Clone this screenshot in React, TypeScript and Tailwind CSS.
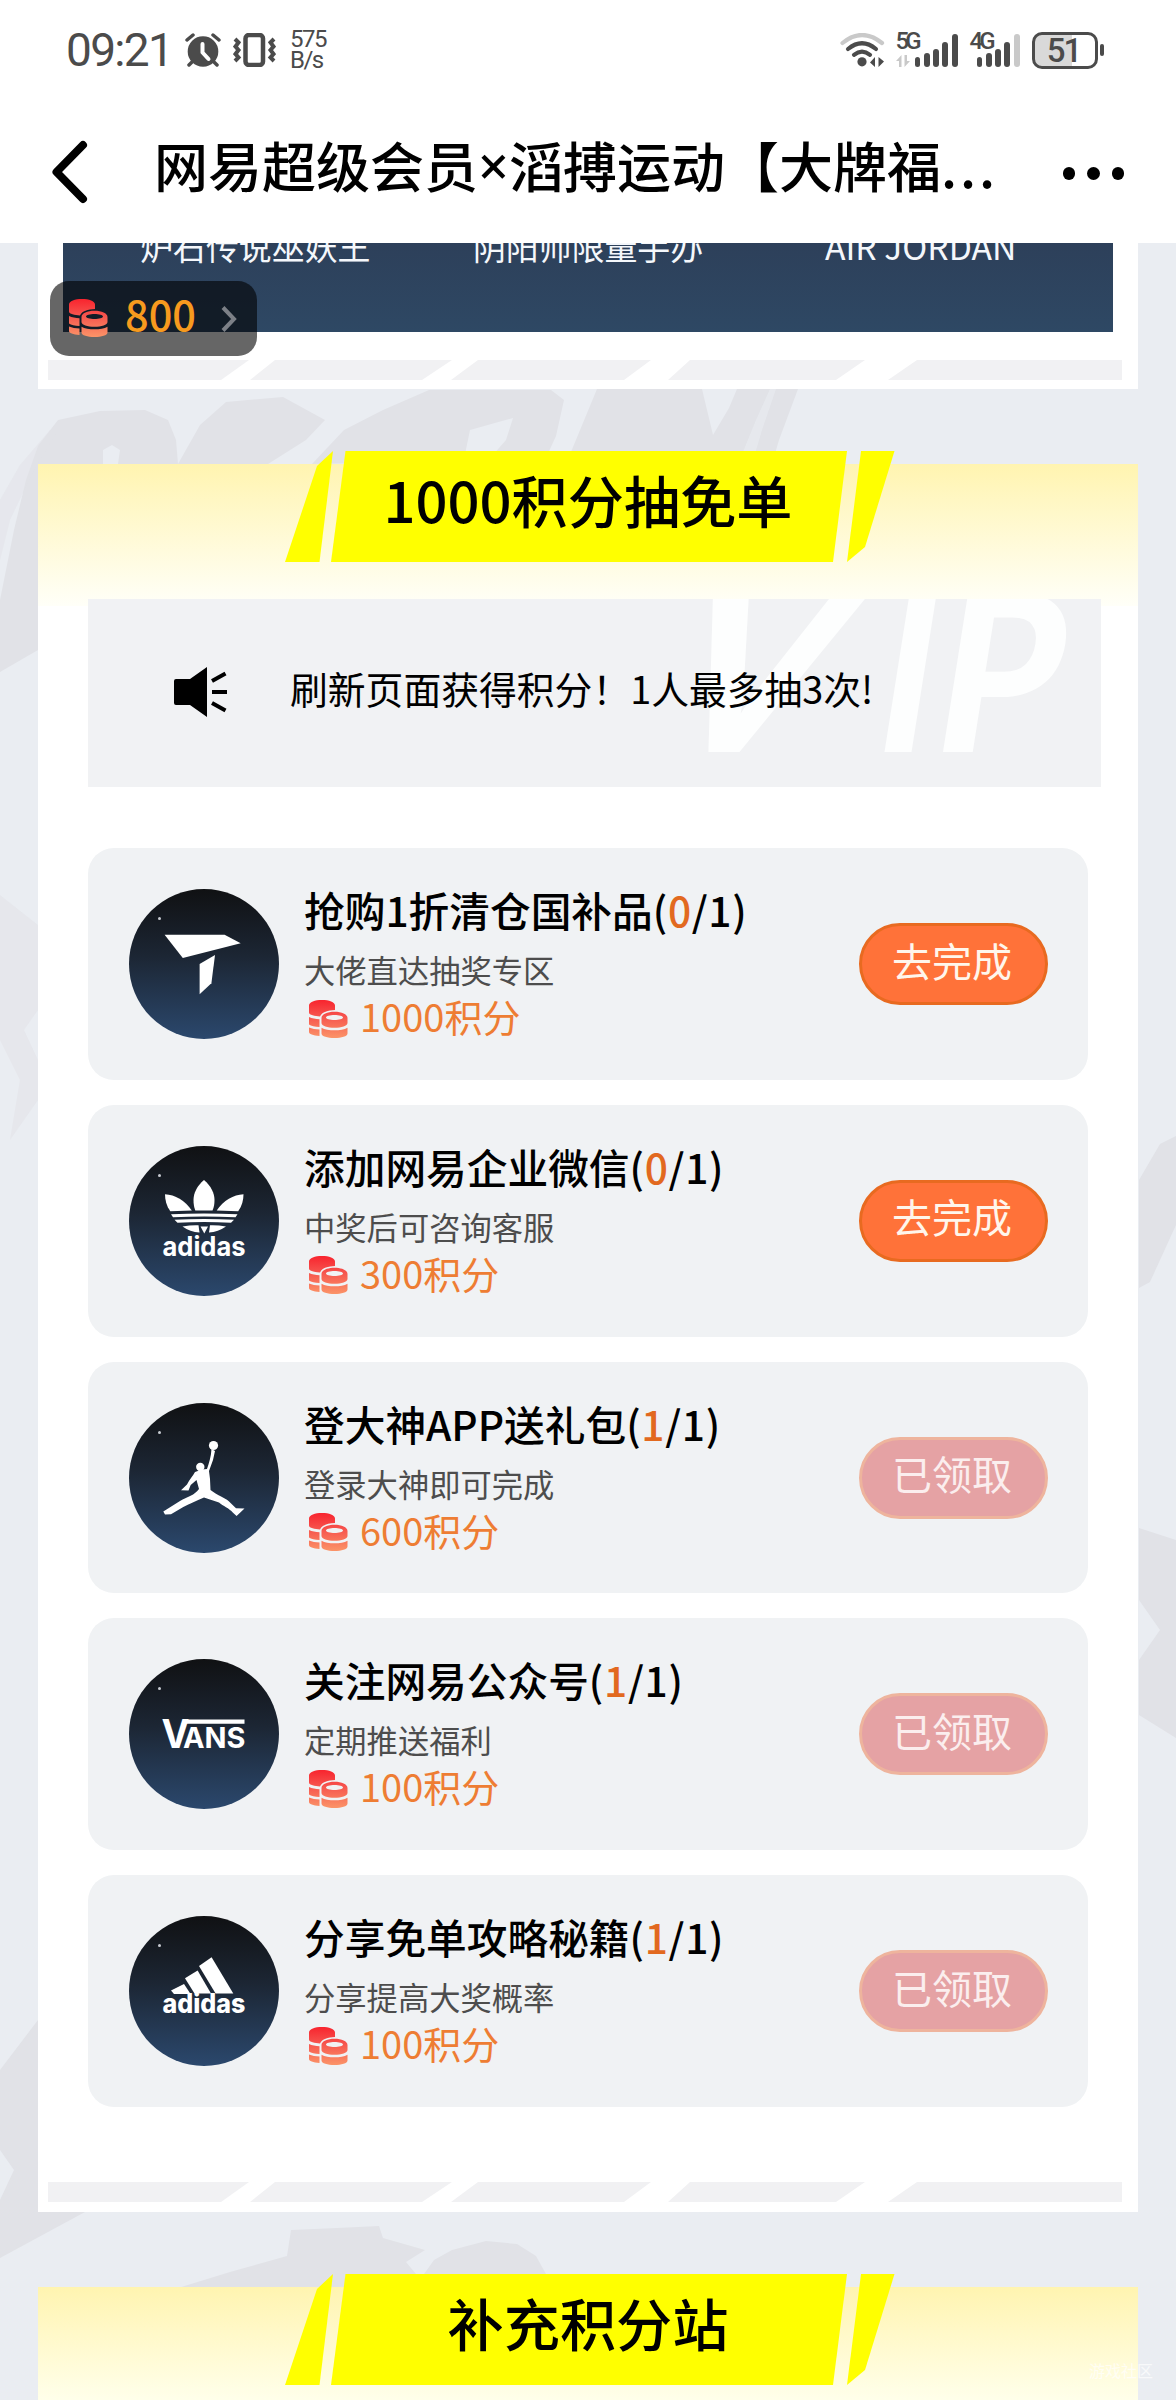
import React from "react";

interface Task {
  title: string;
  done: number;
  desc: string;
  points: number;
  logo: React.ReactNode;
}

const CoinIcon: React.FC<{ id: string }> = ({ id }) => (
  <svg width="39" height="38" viewBox="0 0 39 38" className="shrink-0">
    <defs>
      <linearGradient id={id} gradientUnits="userSpaceOnUse" x1="0" y1="0" x2="0" y2="38">
        <stop offset="0" stopColor="#f8242e" />
        <stop offset="0.4" stopColor="#f6514c" />
        <stop offset="1" stopColor="#fb9468" />
      </linearGradient>
    </defs>
    <g fill={`url(#${id})`}>
      <path d="M0 5.500C0 2 6 0 13 0s13 2 13 5.500V10c-7 .2-13 2-15 6.500C6 16.200 0 15 0 12.500z" />
      <path d="M0 17c3 1.400 6.500 2 10.500 2.200V27C6 26.800 2 26 0 24.500z" />
      <path d="M0 27.500c3 1.300 6.500 1.800 10.500 2V36C4 35.500 0 34 0 32z" />
      <path
        fillRule="evenodd"
        d="M12.500 18c0-3.800 6-6.200 13-6.200s13 2.400 13 6.200v5c0 3-6 4.800-13 4.800s-13-1.800-13-4.800zM17 17.500c0 1.500 4 2.500 8.500 2.500s8.500-1 8.500-2.500-4-2.500-8.500-2.500-8.500 1-8.500 2.500z"
      />
      <path d="M12.500 27.800c3 1.900 8 2.500 13 2.500s10-.6 13-2.500v5.700c0 2.800-6 4.500-13 4.500s-13-1.700-13-4.500z" />
    </g>
  </svg>
);

const TopsportsLogo = () => (
  <g>
    <path d="M35.600 45.700H95.600L111.700 54.300 53.800 69z" />
    <path d="M70.600 75L86 66 82.400 94.300 70.600 105.300z" />
  </g>
);

const TrefoilLogo = () => (
  <g>
    <path d="M75 34C82 40 85.500 47 85.500 54c0 4-.5 7-2 10.600H66.300C65 61 64.500 58 64.500 54c0-7 3.500-14 10.500-20z" />
    <path d="M36 48.300c10 .5 20 6 26.800 16.300L41.300 65.300C37.500 60 36 54 36 48.300z" />
    <path d="M114.500 48.300c-10 .5-20 6-26.800 16.300l21.500.7c3.800-5.300 5.300-11.300 5.300-17z" />
    <path d="M42 68.300Q75 66.500 108.500 68.300L106.500 71.300Q75 69.500 44 71.300z" />
    <path d="M45.500 73.800Q75 72 105 73.800L102 76.800Q75 75 48.500 76.800z" />
    <path d="M53.500 80.500Q62 79 69.500 79.300L70.500 86.500Q61 86 53.500 80.500z" />
    <path d="M97 80.500Q88.500 79 81 79.300L80 86.500Q89 86 97 80.500z" />
    <path d="M71.500 80.500H79L75.300 87.500z" />
    <text x="33.500" y="110" fontSize="27" textLength="83" lengthAdjust="spacingAndGlyphs" className="font-['Inter'] font-bold">
      adidas
    </text>
  </g>
);

const JordanLogo = () => (
  <g>
    <circle cx="84.500" cy="42.500" r="4.600" />
    <circle cx="71.300" cy="64" r="4.200" />
    <path d="M82.500 46L86 48 84 57 80 68 81 76 81.500 87C88 92 96 95 99.500 98L107 105.200 115.500 105.500 107.600 113 104 109.800C100 105 94 103 90 99.500L75 94.500C67 98 60 101 54.300 104L42 111.300 36 111.500 34.300 108.500 51 98C58 94 66 92 70 86L67.500 77 61.700 82 59.500 87.500 52 87.300 58 81.500C60 77 64 73 66 69L73 66.500 78 66C80 60 82 54 82.500 46z" />
  </g>
);

const VansLogo = () => (
  <g className="font-['Inter'] font-bold">
    <text x="32.500" y="89.300" fontSize="39.500" textLength="28" lengthAdjust="spacingAndGlyphs">
      V
    </text>
    <path d="M54.500 60.500H115.500V64.800H52.500z" />
    <text x="54" y="89.300" fontSize="28.500" textLength="62.500" lengthAdjust="spacingAndGlyphs">
      ANS
    </text>
  </g>
);

const AdidasLogo = () => (
  <g>
    <path d="M82.600 41.300L104.300 77.500H86.600L70 50z" />
    <path d="M68.600 54.600L82 77.500H65.500L56 62.300z" />
    <path d="M55 68L61.600 78H45L42 74.600z" />
    <text x="33.500" y="97.300" fontSize="27" textLength="83" lengthAdjust="spacingAndGlyphs" className="font-['Inter'] font-extrabold">
      adidas
    </text>
  </g>
);

const tasks: Task[] = [
  { title: "抢购1折清仓国补品", done: 0, desc: "大佬直达抽奖专区", points: 1000, logo: <TopsportsLogo /> },
  { title: "添加网易企业微信", done: 0, desc: "中奖后可咨询客服", points: 300, logo: <TrefoilLogo /> },
  { title: "登大神APP送礼包", done: 1, desc: "登录大神即可完成", points: 600, logo: <JordanLogo /> },
  { title: "关注网易公众号", done: 1, desc: "定期推送福利", points: 100, logo: <VansLogo /> },
  { title: "分享免单攻略秘籍", done: 1, desc: "分享提高大奖概率", points: 100, logo: <AdidasLogo /> },
];

const SignalBars: React.FC<{ level: number }> = ({ level }) => (
  <div className="flex items-end gap-[3.500px]">
    {["h-[10px]", "h-[14px]", "h-[18px]", "h-[25px]", "h-[33px]"].map((h, i) => (
      <span key={h} className={`w-[5.800px] rounded-full ${h} ${i < level ? "bg-[#4b4b4b]" : "bg-[#c9c9c9]"}`} />
    ))}
  </div>
);

const StatusBar = () => (
  <div className="flex h-[100px] items-center pl-[66px] pr-[72px] font-['Roboto'] text-[#4b4b4b]">
    <span className="w-[119px] text-[46px] leading-none tracking-[-1.700px]">09:21</span>
    {/* alarm */}
    <svg width="36" height="34" viewBox="0 0 36 34">
      <circle cx="18" cy="18.500" r="15.300" fill="currentColor" />
      <g fill="none" stroke="currentColor" strokeWidth="3.500" strokeLinecap="round">
        <path d="M2 7L8 2M34 7L28 2M7 29L4 32M29 29L32 32" />
      </g>
      <path d="M17.500 11V19.500L23.500 26" fill="none" stroke="#fff" strokeWidth="4" strokeLinecap="round" strokeLinejoin="round" />
    </svg>
    {/* vibrate */}
    <svg width="43" height="34" viewBox="0 0 43 34" className="ml-[12px]" fill="none" stroke="currentColor">
      <rect x="12.500" y="2" width="17.500" height="30" rx="3.500" strokeWidth="4.500" />
      <path d="M2 6L5.500 9.500 2.500 13.500 5.500 17 2.500 21 5.500 24.500 2 28M41 6L37.500 9.500 40.500 13.500 37.500 17 40.500 21 37.500 24.500 41 28" strokeWidth="4" />
    </svg>
    <div className="ml-[14px] flex flex-col text-[24px] leading-[21px] tracking-[-1.500px]">
      <span>575</span>
      <span>B/s</span>
    </div>
    {/* wifi */}
    <svg width="45" height="34" viewBox="0 0 45 34" className="ml-auto" fill="none" strokeWidth="4.200" strokeLinecap="round">
      <path d="M2.500 10Q22 -6 42 10" stroke="#c9c9c9" />
      <path d="M8 16Q22 4.500 36 16M14 21.800Q22 15.500 30 21.800" stroke="#4b4b4b" />
      <circle cx="22" cy="28.800" r="4.600" fill="#4b4b4b" />
      <path d="M35 24V34L30 29.500zM38.500 24V34L44 28.500z" fill="#4b4b4b" />
    </svg>
    <div className="relative ml-[11px] flex h-[34px] w-[62px] items-end justify-end">
      <span className="absolute left-0 top-0 text-[24px] font-medium leading-[17px] tracking-[-4px]">5G</span>
      <svg width="14" height="12" viewBox="0 0 14 12" className="absolute bottom-0 left-0" fill="#c9c9c9">
        <path d="M5.500 0V12H3V6H0zM8.500 12V0H11V6H14z" />
      </svg>
      <SignalBars level={5} />
    </div>
    <div className="relative ml-[12px] flex h-[34px] w-[50px] items-end justify-end">
      <span className="absolute left-0 top-0 text-[24px] font-medium leading-[17px] tracking-[-4px]">4G</span>
      <SignalBars level={4} />
    </div>
    <div className="ml-[12px] flex items-center gap-[2px]">
      <div className="flex h-[37px] w-[66px] items-center justify-center rounded-[10px] border-3 border-[#4b4b4b] bg-linear-to-r from-[#d9d9d9] from-[62%] to-white to-[62%] pr-[2px] text-[33px] font-medium leading-none tracking-[-2px]">
        51
      </div>
      <span className="h-[12px] w-[4.500px] rounded-full bg-[#4b4b4b]" />
    </div>
  </div>
);

const NavBar = () => (
  <div className="flex h-[143px] items-start pl-[48px] pr-[52px] pt-[36px] text-black">
    <svg width="44" height="72" viewBox="0 0 44 72" fill="none" stroke="#000" strokeWidth="8" strokeLinecap="round" strokeLinejoin="round">
      <path d="M35 9L8.500 36 35 63" />
    </svg>
    <div className="-mt-[4px] ml-[62px] flex text-[54px] font-medium leading-[66px]">
      <span>网易超级会员</span>
      <span className="font-['Noto_Sans']">×</span>
      <span>滔搏运动【大牌福</span>
      <span className="tracking-[3px]">...</span>
    </div>
    <div className="ml-auto mt-[31px] flex gap-[12px]">
      <span className="size-[12.500px] rounded-full bg-black" />
      <span className="size-[12.500px] rounded-full bg-black" />
      <span className="size-[12.500px] rounded-full bg-black" />
    </div>
  </div>
);

// brush lettering behind the panels
const BrushBackground = () => (
  <svg width="1176" height="2157" viewBox="0 243 1176 2157" className="absolute left-0 top-0" fill="#e1e2e7">
    <path fillRule="evenodd" d="M0 600L14 530 26 480 38 446L58 420 100 411 145 410 168 420 176 440 178 464H38V650L0 672zM103 464V450L112 445 120 450 118 464z" />
    <path d="M0 500L20 465 50 430 56 434 34 470 10 520 0 560z" opacity=".5" />
    <path d="M178 464L200 425 226 402 283 397 325 420 306 440 268 464z" />
    <path fillRule="evenodd" d="M312 464L344 430 383 410 429 390H551L564 400 556 436 545 460zM463 464L470 430 513 418 506 440 485 464z" />
    <path d="M566 464L597 389H702L713 435 729 408 737 389H798L779 440 772 464z" />
    <path d="M738 464L756 420 770 389H776L762 430 752 464z" fill="#eaedf2" opacity=".6" />
    <path d="M0 895L38 925V1010L24 1030 38 1060V1100L10 1140 20 1080 0 1040z" opacity=".55" />
    <path d="M1176 1136L1160 1144 1139 1180V1288L1150 1282 1176 1225z" />
    <path d="M1139 1528L1176 1540V1738L1139 1715V1660L1160 1630 1139 1600z" />
    <path d="M0 2070L38 2020V2212H85L0 2258V2200L14 2170 0 2150z" />
    <path d="M178 2288L230 2272 287 2256 291 2230 337 2228 379 2226 383 2238 425 2250 406 2262 416 2274 424 2274 434 2260 452 2250 486 2241 517 2244 536 2256 546 2274V2288z" />
  </svg>
);

const StripeFooter = () => (
  <svg width="1075" height="20" viewBox="0 0 1075 20" className="ml-[10px] block" fill="#f1f1f3">
    <path d="M0 0H201L173 20H0z" />
    <path d="M227 0H404L374 20H202z" />
    <path d="M430 0H603L576 20H403z" />
    <path d="M642 0H817L788 20H620z" />
    <path d="M869 0H1074V20H840z" />
  </svg>
);

const SectionBanner: React.FC<{ title: string }> = ({ title }) => (
  <div className="relative -mt-[13px] ml-[247px] h-[111px] w-[610px]">
    <svg width="610" height="111" viewBox="0 0 610 111" className="absolute inset-0" fill="#ffff00">
      <path d="M48 0L32 15 0 111H34.500z" />
      <path d="M60.500 0H562L548 111H46z" />
      <path d="M576 0H609.500L580 96 562 111z" />
    </svg>
    <h2 className="relative pr-[4px] pt-[8px] text-center text-[56.200px] font-medium leading-[80px] text-black">{title}</h2>
  </div>
);

const Notice = () => (
  <div className="relative ml-[50px] mt-[37px] flex h-[188px] w-[1013px] items-center overflow-hidden bg-[#f1f2f4] pl-[86px]">
    <svg width="413" height="188" viewBox="0 0 413 188" className="absolute left-[600px] top-0 font-['Lato'] font-black" fill="#fdfefe">
      <text transform="translate(-44 153) skewX(-23)" fontSize="232" textLength="160" lengthAdjust="spacingAndGlyphs">
        V
      </text>
      <text transform="translate(183 153) skewX(-9)" fontSize="232" textLength="54" lengthAdjust="spacingAndGlyphs">
        I
      </text>
      <text transform="translate(240 153) skewX(-9)" fontSize="220" textLength="124" lengthAdjust="spacingAndGlyphs">
        P
      </text>
    </svg>
    <svg width="54" height="52" viewBox="0 0 54 52" className="relative -mt-[3px]">
      <path d="M2 13H16L33 1V51L16 39H2Q0 39 0 37V15Q0 13 2 13z" />
      <path d="M38 15L51.500 7.500M38 26H53M38 37L51.500 44.500" stroke="#000" strokeWidth="4" />
    </svg>
    <span className="relative ml-[62px] -mt-[11px] text-[37.800px] leading-none text-black">刷新页面获得积分！1人最多抽3次!</span>
  </div>
);

const TaskCard: React.FC<{ task: Task; index: number }> = ({ task, index }) => {
  const claimed = task.done === 1;
  return (
    <div className="flex h-[231.800px] rounded-[26px] bg-[#f0f2f4] pl-[41px] pr-[40px]">
      <svg width="150" height="150" viewBox="0 0 150 150" className="mt-[41px]">
        <defs>
          <linearGradient id={`disc${index}`} x1="0" y1="0" x2="0" y2="1">
            <stop offset="0" stopColor="#101113" />
            <stop offset="0.450" stopColor="#1c2634" />
            <stop offset="1" stopColor="#2b486d" />
          </linearGradient>
        </defs>
        <circle cx="75" cy="75" r="75" fill={`url(#disc${index})`} />
        <circle cx="30.500" cy="29.500" r="1.500" fill="#c8ccd2" />
        <g fill="#fff">{task.logo}</g>
      </svg>
      <div className="ml-[25px] flex flex-col">
        <p className="mt-[37px] text-[40.700px] font-medium leading-[50px] text-black">
          {task.title}
          <span className="tracking-[0.700px]">
            (<span className="text-[#e2691f]">{task.done}</span>/1)
          </span>
        </p>
        <p className="mt-[15px] text-[31.300px] leading-[40px] text-[#4d4d4d]">{task.desc}</p>
        <div className="mt-[3px] flex items-center gap-[12px] pl-[5px] text-[38px] leading-[46px] text-[#ee7d33]">
          <div className="mt-[5px]">
            <CoinIcon id={`coin${index}`} />
          </div>
          <span>{task.points}积分</span>
        </div>
      </div>
      <button
        className={`ml-auto mt-[75px] h-[82px] w-[189px] rounded-full border-3 pb-[9px] pr-[3px] text-[40px] leading-none ${
          claimed ? "border-[#eeb49d] bg-[#e5a2a4] text-[#fbeeee]" : "border-[#e86a20] bg-[#ff7239] text-[#fff6ec]"
        }`}
      >
        {claimed ? "已领取" : "去完成"}
      </button>
    </div>
  );
};

const App: React.FC = () => {
  return (
    <div className="flex h-[2400px] w-[1176px] flex-col overflow-hidden bg-white font-['Noto_Sans_CJK_SC',sans-serif]">
      <StatusBar />
      <NavBar />
      <main className="relative flow-root flex-1 overflow-hidden bg-[#eaedf2]">
        <BrushBackground />

        <section className="relative mx-[38px] h-[146px] bg-white">
          <div className="mx-[25px] grid h-[89px] grid-cols-3 bg-linear-to-b from-[#2d405a] to-[#2e4864] px-[26px] text-center text-[32.900px] leading-[40px] text-[#f4f7fb]">
            <span className="-mt-[17px]">炉石传说巫妖王</span>
            <span className="-mt-[17px]">阴阳师限量手办</span>
            <span className="-mt-[17px] text-[33.700px]">AIR JORDAN</span>
          </div>
          <div className="mt-[28px]">
            <StripeFooter />
          </div>
          {/* floating points balance */}
          <div className="absolute left-[12px] top-[38px] flex h-[75px] w-[207px] items-center rounded-[19px] bg-black/60 pb-[2px] pl-[19px]">
            <CoinIcon id="coinBalance" />
            <span className="-mt-[8px] ml-[17px] text-[41.500px] font-medium leading-none text-[#f79a1e]">800</span>
            <svg width="18" height="28" viewBox="0 0 18 28" className="ml-[24px] mt-[2px]" fill="none" stroke="#7c8087" strokeWidth="4">
              <path d="M3 2.500L14 14 3 25.500" />
            </svg>
          </div>
        </section>

        <section className="relative mx-[38px] mt-[75px] flow-root h-[1748px] bg-white bg-linear-to-b from-[#fff4b0] to-[#fffff8] bg-size-[100%_142px] bg-no-repeat">
          <SectionBanner title="1000积分抽免单" />
          <Notice />
          <div className="ml-[50px] mt-[61px] flex w-[1000px] flex-col gap-[25px]">
            {tasks.map((task, index) => (
              <TaskCard key={task.title} task={task} index={index} />
            ))}
          </div>
          <div className="mt-[75px]">
            <StripeFooter />
          </div>
        </section>

        <section className="relative mx-[38px] mt-[75px] flow-root h-[113px] bg-linear-to-b from-[#fff4b0] to-[#ffffea]">
          <SectionBanner title="补充积分站" />
        </section>
        <span className="absolute bottom-[22px] right-[23px] text-[16px] leading-none text-white/70">游戏社区</span>
      </main>
    </div>
  );
};

export default App;
